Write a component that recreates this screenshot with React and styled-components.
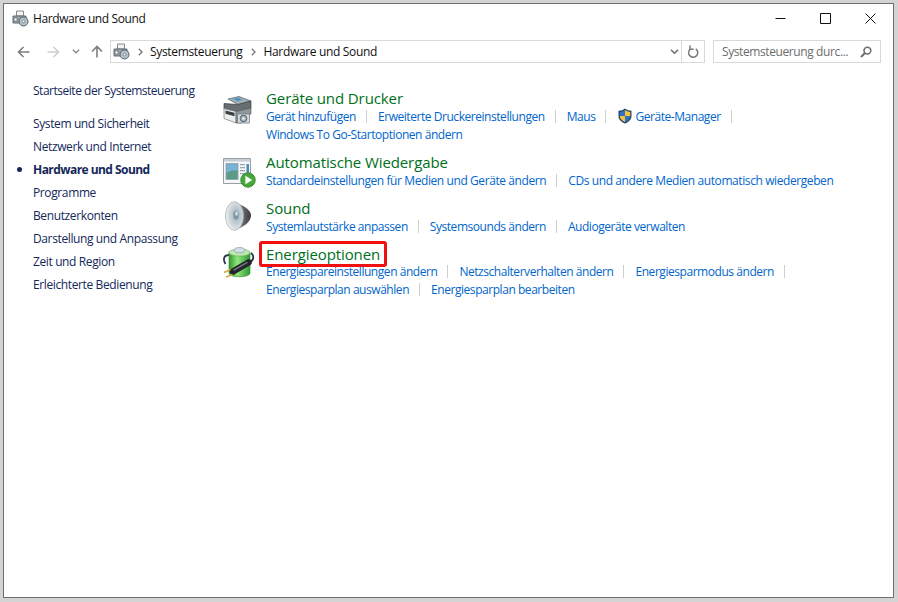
import styled, { createGlobalStyle } from "styled-components";
import { Fragment } from "react";

const GlobalStyle = createGlobalStyle`
  html, body { margin: 0; padding: 0; width: 898px; height: 602px; overflow: hidden; background: #d4d4d4; }
  * { box-sizing: border-box; }
  body { font-family: "Open Sans", "Noto Sans", sans-serif; font-size: 12px; }
`;

const Page = styled.div`
  width: 898px;
  height: 602px;
  padding: 3px 4px 4px 3px;
`;

const Window = styled.div`
  width: 891px;
  height: 595px;
  background: #fff;
  border: 1px solid #6f6f6f;
  display: flex;
  flex-direction: column;
`;

const TitleBar = styled.div`
  height: 29px;
  display: flex;
  align-items: center;
  padding-left: 8px;
`;

const TitleText = styled.span`
  flex: 1;
  padding-left: 4px;
  font-size: 12px;
  letter-spacing: -0.4px;
  color: #111;
`;

const WinButton = styled.button`
  width: 45px;
  height: 29px;
  border: 0;
  padding: 0;
  background: none;
  display: flex;
  align-items: center;
  justify-content: center;
`;

const NavBar = styled.div`
  height: 23px;
  margin-top: 7px;
  display: flex;
  align-items: center;
  padding-left: 4px;
`;

const NavButton = styled.div`
  width: ${({ w }) => w}px;
  height: 22px;
  display: flex;
  align-items: center;
  justify-content: center;
`;

const AddressBox = styled.div`
  width: 595px;
  height: 23px;
  border: 1px solid #d9d9d9;
  display: flex;
  align-items: center;
  padding-left: 2px;
`;

const Crumb = styled.span`
  font-size: 12px;
  letter-spacing: -0.33px;
  padding-right: 1px;
  color: #111;
`;

const CrumbArrow = styled.span`
  width: 20px;
  display: flex;
  justify-content: center;
`;

const AddressEnd = styled.div`
  margin-left: auto;
  display: flex;
  align-items: center;
  height: 21px;
`;

const AddressCell = styled.div`
  width: ${({ w }) => w}px;
  height: 21px;
  display: flex;
  align-items: center;
  justify-content: center;
  border-left: ${({ divided }) => (divided ? "1px solid #d9d9d9" : "0")};
`;

const SearchBox = styled.div`
  width: 168px;
  height: 23px;
  margin-left: 8px;
  border: 1px solid #d9d9d9;
  display: flex;
  align-items: center;
  justify-content: space-between;
  padding: 0 8px 0 8px;
  font-size: 12px;
  letter-spacing: -0.4px;
  color: #6d6d6d;
`;

const Body = styled.div`
  flex: 1;
  display: flex;
`;

const SideBar = styled.nav`
  width: 218px;
  padding: 16px 0 0 29px;
  display: flex;
  flex-direction: column;
`;

const SideItem = styled.div`
  position: relative;
  height: 23px;
  line-height: 23px;
  font-size: 12px;
  letter-spacing: ${({ active, home }) => (active ? "-0.55px" : home ? "-0.48px" : "-0.38px")};
  font-weight: ${({ active }) => (active ? 700 : 400)};
  color: #14285a;
  margin-bottom: ${({ home }) => (home ? "10px" : "0")};
  white-space: nowrap;

  ${({ active }) =>
    active &&
    `&::before {
      content: "";
      position: absolute;
      left: -16px;
      top: 9px;
      width: 5px;
      height: 5px;
      border-radius: 50%;
      background: #14285a;
    }`}
`;

const Main = styled.main`
  flex: 1;
  padding-top: 26px;
  display: flex;
  flex-direction: column;
`;

const Section = styled.section`
  display: flex;
  height: ${({ h }) => h}px;
`;

const IconCell = styled.div`
  width: 44px;
  padding: ${({ top }) => top}px 0 0 ${({ left }) => left}px;
  display: flex;
  justify-content: flex-start;
  align-items: flex-start;
`;

const Heading = styled.h2`
  position: relative;
  display: block;
  width: fit-content;
  margin: 0;
  height: 18px;
  line-height: 18px;
  font-size: 15px;
  font-weight: 400;
  letter-spacing: -0.1px;
  color: #00701a;

  ${({ marked }) =>
    marked &&
    `&::after {
      content: "";
      position: absolute;
      left: -7px;
      right: -7px;
      top: -4px;
      bottom: -4px;
      border: 3px solid #f01010;
      border-radius: 3px;
    }`}
`;

const LinkRow = styled.div`
  display: flex;
  align-items: center;
  height: ${({ h }) => h}px;
  letter-spacing: ${({ spacing }) => spacing}px;
  white-space: nowrap;
`;

const TaskLink = styled.a`
  display: inline-flex;
  align-items: center;
  gap: 2px;
  font-size: 12px;
  color: #0066cc;
`;

const Sep = styled.span`
  width: 1px;
  height: 13px;
  margin: 0 11px 0 10px;
  background: #cfcfcf;
`;

const BackArrow = ({ color }) => (
  <svg width="13" height="12" viewBox="0 0 13 12" fill="none" stroke={color} strokeWidth="1.6">
    <path d="M12.500 6H1.500M6.500 1 1.500 6l5 5" />
  </svg>
);

const ForwardArrow = ({ color }) => (
  <svg width="13" height="12" viewBox="0 0 13 12" fill="none" stroke={color} strokeWidth="1.6">
    <path d="M.5 6h11M6.500 1l5 5-5 5" />
  </svg>
);

const UpArrow = () => (
  <svg width="12" height="13" viewBox="0 0 12 13" fill="none" stroke="#7d7d7d" strokeWidth="1.6">
    <path d="M6 12.500V1.500M1 6.500l5-5 5 5" />
  </svg>
);

const Chevron = ({ color, size = 8 }) => (
  <svg width={size} height={size * 0.6} viewBox="0 0 8 5" fill="none" stroke={color} strokeWidth="1.4">
    <path d="M.7.7 4 4l3.300-3.300" />
  </svg>
);

const CrumbChevron = () => (
  <svg width="5" height="8" viewBox="0 0 5 8" fill="none" stroke="#777" strokeWidth="1.3">
    <path d="M.8.8 4 4 .8 7.200" />
  </svg>
);

const Refresh = () => (
  <svg width="13" height="14" viewBox="0 0 13 14" fill="none" stroke="#7a7a7a" strokeWidth="1.5">
    <path d="M3.200 4.100a4.600 4.600 0 1 0 5.600-.3" />
    <path d="M3 .6v3.700h3.700" />
  </svg>
);

const SearchGlass = () => (
  <svg width="12" height="12" viewBox="0 0 12 12" fill="none" stroke="#6e6e6e" strokeWidth="1.6">
    <circle cx="7.400" cy="4.600" r="3.400" />
    <path d="M4.900 7 1 11" strokeWidth="2" />
  </svg>
);

const SmallDeviceIcon = () => (
  <svg width="17" height="17" viewBox="0 0 17 17">
    <path d="M4.500 1h7v5h-7z" fill="#f2f2f2" stroke="#8a8a8a" />
    <path d="M1 6h13v7H1z" fill="#9ba3a8" stroke="#5f6a70" />
    <path d="M2 8h3v3H2z" fill="#fff" stroke="#50585c" strokeWidth=".6" />
    <circle cx="11.500" cy="11.500" r="4.500" fill="#b4c0c6" stroke="#56646c" />
    <circle cx="11.500" cy="11.500" r="1.400" fill="#e9eef0" stroke="#56646c" strokeWidth=".6" />
  </svg>
);

const PrinterIcon = () => (
  <svg width="29" height="28" viewBox="0 0 29 28">
    <path d="M5 3 16 .5 28 5 15 8.500z" fill="#a3afb4" stroke="#555f64" strokeWidth=".7" />
    <path d="M10 3l5-1 4.500 1.800-5 1.200z" fill="#3d94c4" />
    <path d="M1 7.500 15 8.500 28 5v7L15 16 1 13z" fill="#666e72" stroke="#3a4144" strokeWidth=".7" />
    <path d="M1 12.500 13 15.500V27L1 22.500z" fill="#eceeee" stroke="#777" strokeWidth=".7" />
    <path d="M2.500 14.500l9 2.200v3.500l-9-2.400z" fill="#3a4144" />
    <path d="M13 15.500 28 12v6l-9 3v6h-6z" fill="#8f979c" stroke="#555" strokeWidth=".6" />
    <path d="M14.500 18h12v9h-12z" fill="#d3dadd" stroke="#66727a" strokeWidth=".7" />
    <circle cx="20.500" cy="22.500" r="3.400" fill="#9aa8af" stroke="#4d5a62" strokeWidth=".8" />
    <circle cx="20.500" cy="22.500" r="1.300" fill="#f2f5f6" />
  </svg>
);

const AutoplayIcon = () => (
  <svg width="34" height="30" viewBox="0 0 34 30">
    <path d="M1.500.5h27v25h-27z" fill="#f4f6f7" stroke="#98a0a6" />
    <path d="M2 1h26v2.600H2z" fill="#c8ced3" />
    <path d="M4 5.500h12v16H4z" fill="#5d9a86" stroke="#8fa3ad" strokeWidth=".8" />
    <path d="M4.400 6h11.200v6.500C11 11.500 8 13 4.400 15z" fill="#79b1d8" />
    <path d="M18 6h5v1.200h-5zM18 9h5v1.200h-5zM18 12h5v1.200h-5zM18 15h5v1.200h-5z" fill="#9aa6ad" />
    <path d="M24.500 6h2.500v9h-2.500z" fill="#4a88b8" />
    <circle cx="26" cy="22" r="7.200" fill="#46a83a" stroke="#2f8a2c" />
    <path d="M23.400 17.800v8.400l6.800-4.200z" fill="#fff" />
  </svg>
);

const SpeakerIcon = () => (
  <svg width="27" height="30" viewBox="0 0 27 30">
    <defs>
      <linearGradient id="spkBack" x1="0" x2="1" y1="0" y2="0">
        <stop offset="0" stopColor="#8f8f8f" />
        <stop offset=".55" stopColor="#6a6a6a" />
        <stop offset="1" stopColor="#3a3a3a" />
      </linearGradient>
      <radialGradient id="spkCone" cx=".6" cy=".47" r=".58">
        <stop offset="0" stopColor="#7f98a6" />
        <stop offset=".35" stopColor="#b6c4cc" />
        <stop offset=".8" stopColor="#d9dfe2" />
        <stop offset="1" stopColor="#f4f5f6" />
      </radialGradient>
    </defs>
    <path d="M8 1.500C16 3 25.500 8 26 14c.5 6-7 13-17 14.500z" fill="url(#spkBack)" />
    <ellipse cx="9.500" cy="15" rx="9" ry="14.300" fill="url(#spkCone)" stroke="#a8adb0" strokeWidth=".8" />
    <ellipse cx="11" cy="14" rx="2.600" ry="4.500" fill="#7f97a4" />
    <ellipse cx="11.500" cy="12.500" rx="1.300" ry="2.200" fill="#d3e0e6" />
  </svg>
);

const BatteryIcon = () => (
  <svg width="32" height="31" viewBox="0 0 32 31">
    <defs>
      <linearGradient id="batBody" x1="0" x2="1" y1="0" y2="0">
        <stop offset="0" stopColor="#2f9a2e" />
        <stop offset=".4" stopColor="#92e47c" />
        <stop offset="1" stopColor="#2f9a35" />
      </linearGradient>
    </defs>
    <path d="M6 8C1 8-.5 12 2.500 17" fill="none" stroke="#2b3850" strokeWidth="1.800" />
    <path d="M6 5v21c0 5 21 5 21 0V5z" fill="url(#batBody)" stroke="#2f8a30" strokeWidth=".6" />
    <ellipse cx="16.500" cy="5.500" rx="10.500" ry="3.600" fill="#bfe8ae" stroke="#6fae63" strokeWidth=".6" />
    <ellipse cx="16.500" cy="3.200" rx="5.500" ry="2.700" fill="#cfdfe8" stroke="#7e96a4" strokeWidth=".7" />
    <path d="M26 15c5-1 5.500-6 2-9" fill="none" stroke="#2b3850" strokeWidth="1.800" />
    <path d="M10 24.500 25.500 15.500" fill="none" stroke="#22262a" strokeWidth="6.500" strokeLinecap="round" />
    <path d="M11 23 24 15.500" fill="none" stroke="#6a7278" strokeWidth="1.500" strokeLinecap="round" />
    <path d="M7.500 22.500 1 25.500M9.500 27.500 3 30" stroke="#d4a93e" strokeWidth="1.800" fill="none" />
  </svg>
);

const ShieldIcon = () => (
  <svg width="16" height="16" viewBox="0 0 16 16">
    <path d="M8 .5C6 2 4 2.600 1.500 2.800V8c0 3.400 2.600 6 6.500 7.500 3.900-1.500 6.500-4.100 6.500-7.500V2.800C12 2.600 10 2 8 .5z" fill="#28476f" />
    <path d="M8 2v6H2.800V3.900C4.800 3.700 6.400 3.100 8 2z" fill="#2f73c9" />
    <path d="M8 2c1.600 1.100 3.200 1.700 5.200 1.900V8H8z" fill="#f5c33b" />
    <path d="M2.800 8H8v6.100C5 12.800 2.900 10.800 2.800 8z" fill="#f5c33b" />
    <path d="M8 8h5.200c-.1 2.800-2.200 4.800-5.200 6.100z" fill="#2f73c9" />
  </svg>
);

const SIDE_ITEMS = [
  { label: "System und Sicherheit" },
  { label: "Netzwerk und Internet" },
  { label: "Hardware und Sound", active: true },
  { label: "Programme" },
  { label: "Benutzerkonten" },
  { label: "Darstellung und Anpassung" },
  { label: "Zeit und Region" },
  { label: "Erleichterte Bedienung" },
];

const SECTIONS = [
  {
    title: "Geräte und Drucker",
    Icon: PrinterIcon,
    height: 64,
    iconTop: 7,
    iconLeft: 1,
    rowHeight: 18,
    spacing: -0.45,
    rows: [
      { links: ["Gerät hinzufügen", "Erweiterte Druckereinstellungen", "Maus", "*Geräte-Manager"], trailing: true },
      { links: ["Windows To Go-Startoptionen ändern"] },
    ],
  },
  {
    title: "Automatische Wiedergabe",
    Icon: AutoplayIcon,
    height: 46,
    iconTop: 5,
    iconLeft: 0,
    rowHeight: 18,
    spacing: -0.41,
    rows: [{ links: ["Standardeinstellungen für Medien und Geräte ändern", "CDs und andere Medien automatisch wiedergeben"] }],
  },
  {
    title: "Sound",
    Icon: SpeakerIcon,
    height: 46,
    iconTop: 2,
    iconLeft: 3,
    rowHeight: 18,
    spacing: -0.45,
    rows: [{ links: ["Systemlautstärke anpassen", "Systemsounds ändern", "Audiogeräte verwalten"] }],
  },
  {
    title: "Energieoptionen",
    Icon: BatteryIcon,
    height: 56,
    iconTop: 2,
    iconLeft: 1,
    rowHeight: 17.5,
    spacing: -0.45,
    marked: true,
    rows: [
      { links: ["Energiespareinstellungen ändern", "Netzschalterverhalten ändern", "Energiesparmodus ändern"], trailing: true },
      { links: ["Energiesparplan auswählen", "Energiesparplan bearbeiten"] },
    ],
  },
];

export default function App() {
  return (
    <>
      <GlobalStyle />
      <Page>
        <Window>
          <TitleBar>
            <SmallDeviceIcon />
            <TitleText>Hardware und Sound</TitleText>
            <WinButton>
              <svg width="11" height="11" viewBox="0 0 11 11"><path d="M.5 5.500h10" stroke="#111" /></svg>
            </WinButton>
            <WinButton>
              <svg width="11" height="11" viewBox="0 0 11 11"><path d="M.5.5h10v10H.5z" fill="none" stroke="#111" /></svg>
            </WinButton>
            <WinButton>
              <svg width="11" height="11" viewBox="0 0 11 11"><path d="M.5.5l10 10M10.500.5l-10 10" stroke="#111" /></svg>
            </WinButton>
          </TitleBar>
          <NavBar>
            <NavButton w={30}><BackArrow color="#7d7d7d" /></NavButton>
            <NavButton w={30}><ForwardArrow color="#cfcfcf" /></NavButton>
            <NavButton w={16}><Chevron color="#8a8a8a" /></NavButton>
            <NavButton w={26}><UpArrow /></NavButton>
            <AddressBox>
              <SmallDeviceIcon />
              <CrumbArrow><CrumbChevron /></CrumbArrow>
              <Crumb>Systemsteuerung</Crumb>
              <CrumbArrow><CrumbChevron /></CrumbArrow>
              <Crumb>Hardware und Sound</Crumb>
              <AddressEnd>
                <AddressCell w={14}><Chevron color="#6f6f6f" size={9} /></AddressCell>
                <AddressCell w={23} divided><Refresh /></AddressCell>
              </AddressEnd>
            </AddressBox>
            <SearchBox>
              Systemsteuerung durc...
              <SearchGlass />
            </SearchBox>
          </NavBar>
          <Body>
            <SideBar>
              <SideItem home>Startseite der Systemsteuerung</SideItem>
              {SIDE_ITEMS.map((item) => (
                <SideItem key={item.label} active={item.active}>{item.label}</SideItem>
              ))}
            </SideBar>
            <Main>
              {SECTIONS.map(({ title, Icon, height, iconTop, iconLeft, rowHeight, spacing, marked, rows }) => (
                <Section key={title} h={height}>
                  <IconCell top={iconTop} left={iconLeft}><Icon /></IconCell>
                  <div>
                    <Heading marked={marked}>{title}</Heading>
                    {rows.map((row, r) => (
                      <LinkRow key={r} h={rowHeight} spacing={spacing}>
                        {row.links.map((link, i) => (
                          <Fragment key={link}>
                            {i > 0 && <Sep />}
                            <TaskLink>
                              {link.startsWith("*") && <ShieldIcon />}
                              {link.replace("*", "")}
                            </TaskLink>
                          </Fragment>
                        ))}
                        {row.trailing && <Sep />}
                      </LinkRow>
                    ))}
                  </div>
                </Section>
              ))}
            </Main>
          </Body>
        </Window>
      </Page>
    </>
  );
}
